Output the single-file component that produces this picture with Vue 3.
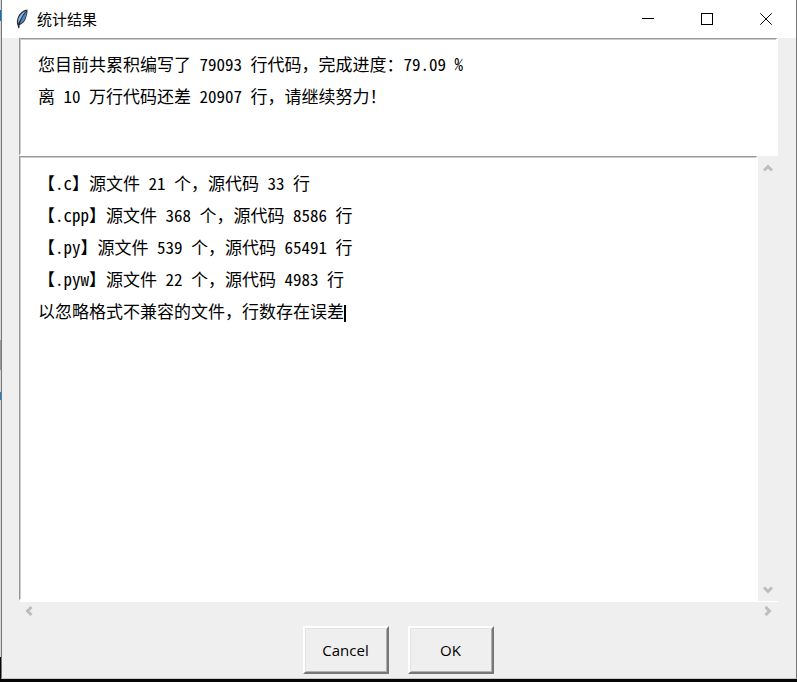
<script setup>
import { ref } from 'vue'

const summary = ref(
  ['您目前共累积编写了 79093 行代码，完成进度：79.09 %', '离 10 万行代码还差 20907 行，请继续努力！'].join('\n')
)

const details = ref(
  [
    '【.c】源文件 21 个，源代码 33 行',
    '【.cpp】源文件 368 个，源代码 8586 行',
    '【.py】源文件 539 个，源代码 65491 行',
    '【.pyw】源文件 22 个，源代码 4983 行',
    '以忽略格式不兼容的文件，行数存在误差'
  ].join('\n')
)
</script>

<template>
  <div class="desktop">
    <main class="window">
      <header class="titlebar">
        <svg class="feather" viewBox="0 0 14 20" aria-hidden="true">
          <path d="M12.4.6C9 .8 5.200 3.600 3.300 7.300 1.800 10.200 1.500 13 2.200 15.500L3.600 19.600 4.300 19.300 4.400 16.200C7.600 15 10 12.400 11 9.200 11.800 6.500 12.900 3.500 12.400.6Z" fill="#27323f" />
          <path d="M11.500 1.700C8.500 2.500 5.700 5 4.200 8 3.200 10.200 2.900 12 3.300 14.200 5 11 7.400 6.600 11.500 1.700Z" fill="#8fb4dc" />
          <path d="M11.700 2.600C11.900 5 10.900 7.200 10.200 9.300 9.200 12 7.100 14.100 4.700 15 5.600 11.200 8.100 6.700 11.700 2.600Z" fill="#4f83bd" />
          <path d="M11.500 1.800C7.600 6.200 4.600 11 3.700 19" fill="none" stroke="#18202b" stroke-width=".6" />
        </svg>
        <h1 class="title">统计结果</h1>
        <div class="controls">
          <button type="button" class="control" aria-label="最小化">
            <svg viewBox="0 0 12 12" shape-rendering="crispEdges"><path d="M0 5.500H12" /></svg>
          </button>
          <button type="button" class="control" aria-label="最大化">
            <svg viewBox="0 0 12 12" shape-rendering="crispEdges"><path d="M.5.5H11.500V11.500H.5Z" /></svg>
          </button>
          <button type="button" class="control" aria-label="关闭">
            <svg viewBox="0 0 12 12"><path d="M.3.3 11.700 11.700M11.700.3.3 11.700" /></svg>
          </button>
        </div>
      </header>

      <section class="content">
        <textarea v-model="summary" class="text summary" aria-label="进度" spellcheck="false" wrap="off"></textarea>

        <div class="scroller">
          <div class="editor">
            <textarea v-model="details" class="text details" aria-label="详情" spellcheck="false" wrap="off"></textarea>
            <span class="caret"></span>
          </div>
          <div class="bar vertical">
            <button type="button" class="arrow" aria-label="向上滚动">
              <svg viewBox="0 0 10 10"><path d="M1 7.500 5 3.500 9 7.500" /></svg>
            </button>
            <button type="button" class="arrow" aria-label="向下滚动">
              <svg viewBox="0 0 10 10"><path d="M1 2.500 5 6.500 9 2.500" /></svg>
            </button>
          </div>
        </div>
        <div class="bar horizontal">
          <button type="button" class="arrow" aria-label="向左滚动">
            <svg viewBox="0 0 10 10"><path d="M7.500 1 3.500 5 7.500 9" /></svg>
          </button>
          <button type="button" class="arrow" aria-label="向右滚动">
            <svg viewBox="0 0 10 10"><path d="M2.500 1 6.500 5 2.500 9" /></svg>
          </button>
        </div>
      </section>

      <footer class="actions">
        <button type="button" class="action">Cancel</button>
        <button type="button" class="action">OK</button>
      </footer>
    </main>
  </div>
</template>

<style>
body {
  margin: 0;
}
</style>

<style scoped>
.desktop {
  box-sizing: border-box;
  display: flex;
  min-height: 100vh;
  padding: 0 0 3px 1px;
  background: linear-gradient(#d5d8da 0 10px, #0078d0 10px 21px, #d5d8da 21px 340px, #999 340px 370px, #d5d8da 370px 392px, #1784d8 392px 400px, #d5d8da 400px calc(100% - 25px), #060606 calc(100% - 25px));
}

.window {
  flex: 1;
  display: flex;
  flex-direction: column;
  min-width: 0;
  border: 1px solid #777;
  border-top: 0;
  border-bottom-color: #c8c8c8;
  background: #efefef;
}

.titlebar {
  display: flex;
  align-items: center;
  height: 38px;
  padding: 0 1px 0 13px;
  background: #fff;
}

.feather {
  width: 14px;
  height: 20px;
}

.title {
  flex: 1;
  margin: 0 0 0 8px;
  color: #000;
  font: 400 15px/20px "Noto Sans CJK SC", sans-serif;
}

.controls {
  display: flex;
}

.control {
  display: grid;
  place-items: center;
  width: 59px;
  height: 38px;
  padding: 0;
  border: 0;
  background: transparent;
}

.control svg {
  width: 12px;
  height: 12px;
  fill: none;
  stroke: #000;
  stroke-width: 1;
}

.content {
  flex: 1;
  display: flex;
  flex-direction: column;
  padding: 0 18px 0 17px;
}

.text {
  display: block;
  box-sizing: border-box;
  width: 100%;
  margin: 0;
  border: 2px solid #fff;
  border-top: 1px solid #999;
  border-left: 1px solid #999;
  border-radius: 0;
  outline: 0;
  resize: none;
  overflow: hidden;
  background: #fff;
  box-shadow: inset 1px 1px #ccc;
  color: #000;
  font: 400 17px/32px "Noto Sans Mono CJK SC", "Liberation Mono", "Noto Sans CJK SC", monospace;
}

.summary {
  height: 118px;
  padding: 9px 18px;
}

.scroller {
  flex: 1;
  display: flex;
}

.editor {
  position: relative;
  flex: 1;
  display: flex;
}

.details {
  padding: 10px 18px;
}

.caret {
  position: absolute;
  top: 149px;
  left: calc(19px + 18em);
  width: 2px;
  height: 17px;
  background: #000;
  font-size: 17px;
}

.bar {
  display: flex;
  justify-content: space-between;
  background: #efefef;
}

.vertical {
  flex-direction: column;
  width: 20px;
  padding: 2px 0 1px;
}

.horizontal {
  height: 18px;
  border-top: 1px solid #fff;
}

.arrow {
  display: grid;
  place-items: center;
  width: 20px;
  height: 20px;
  padding: 0;
  border: 0;
  background: transparent;
}

.horizontal .arrow {
  height: 18px;
}

.arrow svg {
  width: 10px;
  height: 10px;
  fill: none;
  stroke: #bdbdbd;
  stroke-width: 3;
}

.actions {
  display: flex;
  justify-content: center;
  gap: 19px;
  padding: 6px 2px 4px 0;
}

.action {
  width: 86px;
  height: 48px;
  padding: 0;
  border: 2px solid;
  border-color: #fff #777 #777 #fff;
  border-radius: 0;
  background: #efefef;
  box-shadow: inset 1px 1px #e3e3e3, inset -1px -1px #b0b0b0;
  color: #000;
  font: 400 15px/20px "Open Sans", sans-serif;
}
</style>
